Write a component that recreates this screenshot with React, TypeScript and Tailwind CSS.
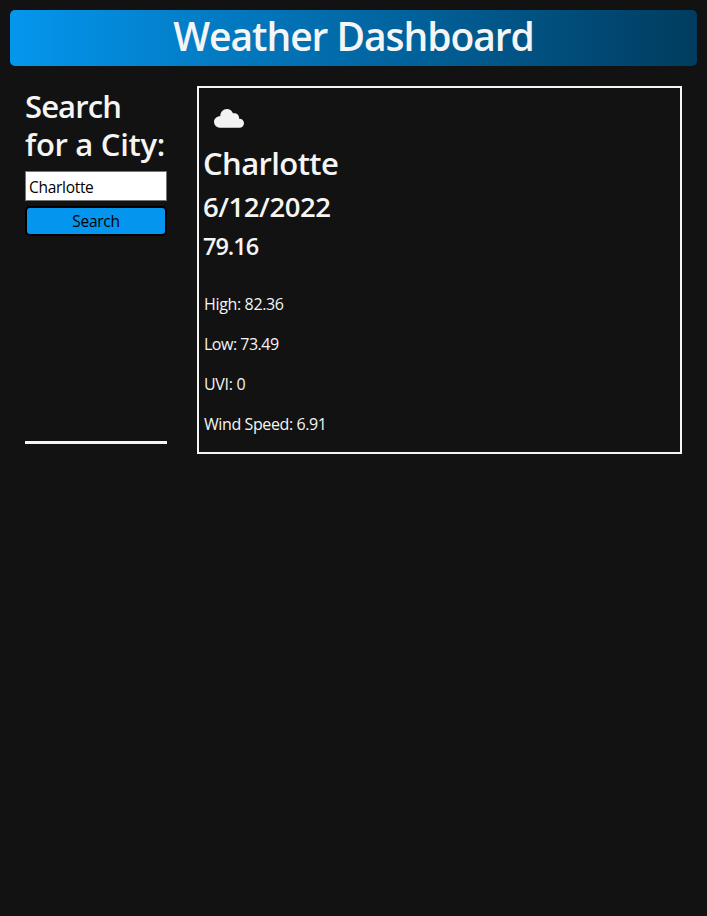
const readings = [
  { text: "High: 82.36", spacing: "tracking-[-0.35px]" },
  { text: "Low: 73.49", spacing: "tracking-[-0.5px]" },
  { text: "UVI: 0", spacing: "tracking-[-0.3px]" },
  { text: "Wind Speed: 6.91", spacing: "tracking-[-0.4px]" },
];

function Cloud() {
  return (
    <svg width="50" height="50" viewBox="0 0 50 50" fill="#f2f2f2" aria-hidden="true">
      <path d="M15.8 34.8a5.9 5.9 0 0 1-5.8-5.9c0-3.2 2.6-5.7 6.2-5.7.2-4.1 3-7.2 6.7-7.2 2.7 0 4.9 1.5 6.1 4.3 3.1-.7 6.1 1.3 6.1 4.3v1.2c2.8-.2 4.9 1.9 4.9 4.5 0 2.5-2 4.5-4.5 4.5z" />
    </svg>
  );
}

export default function App() {
  return (
    <div className="h-[916px] overflow-hidden bg-[#121212] p-[10px] font-['Open_Sans','Noto_Sans',sans-serif] text-[#f5f5f5]">
      <header className="h-14 rounded-[5px] bg-[linear-gradient(90deg,#0496ee,#003c5f)] text-center">
        <h1 className="pt-0.5 text-[39px] leading-[48px] font-semibold tracking-[-1.05px]">Weather Dashboard</h1>
      </header>
      <main className="mt-5 flex">
        <aside className="ml-[15px] h-[358px] w-[142px] border-b-[3px] border-[#f5f5f5]">
          <h2 className="pt-px text-[31px] leading-[38.4px] font-semibold whitespace-nowrap">
            <span className="block tracking-[-0.9px]">Search</span>
            <span className="block tracking-[-0.3px]">for a City:</span>
          </h2>
          <input
            className="mt-[7px] block h-[30px] w-full border border-[#767676] bg-white px-[3px] pt-0.5 text-[15.5px] tracking-[-0.3px] text-black"
            defaultValue="Charlotte"
          />
          <button className="mt-[5px] block h-[30px] w-full rounded-[5px] border-2 border-black bg-[#0496ee] text-[15.5px] leading-[26px] tracking-[-0.3px] text-black">
            Search
          </button>
        </aside>
        <section className="ml-[30px] h-[368px] w-[485px] border-2 border-[#f5f5f5] px-[5px]">
          <div className="h-14 pt-[5px]">
            <Cloud />
          </div>
          <h2 className="-ml-px text-[31px] leading-[38px] font-semibold tracking-[-0.6px]">Charlotte</h2>
          <h3 className="mt-2 -ml-px text-[27.5px] leading-[34px] font-semibold tracking-[-0.45px]">6/12/2022</h3>
          <h4 className="mt-2 -ml-px text-[23.5px] leading-[29px] font-semibold tracking-[-1px]">79.16</h4>
          <div className="mt-[31px] flex flex-col gap-4 text-base leading-6">
            {readings.map((r) => (
              <p key={r.text} className={r.spacing}>
                {r.text}
              </p>
            ))}
          </div>
        </section>
      </main>
    </div>
  );
}
